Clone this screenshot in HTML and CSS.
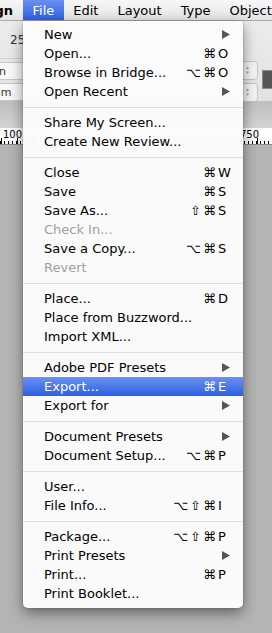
FILE: index.html
```html
<!DOCTYPE html>
<html>
<head>
	<title>File menu</title>
	<link rel="stylesheet" href="styles.css">
</head>
<body>

	<div class="menubar">
		<span class="app"><b>InDesign</b></span>
		<span class="mb-item active">File</span>
		<span class="mb-item">Edit</span>
		<span class="mb-item">Layout</span>
		<span class="mb-item">Type</span>
		<span class="mb-item">Object</span>
	</div>

	<div class="panel">
		<div class="panel-left">
			<div class="zoom">25</div>
			<div class="field f-in">in</div>
			<div class="field f-mm">mm</div>
		</div>
		<div class="panel-right">
			<div class="spinners">
				<div class="spin"><span>&#9652;</span><span>&#9662;</span></div>
				<div class="spin"><span>&#9652;</span><span>&#9662;</span></div>
			</div>
			<div class="swatch"></div>
		</div>
	</div>
	<div class="strip"></div>
	<div class="ruler">
		<span>100</span>
		<span>750</span>
	</div>
	<div class="pasteboard"></div>

	<ul class="menu">
		<li class="item"><span class="label">New</span><span class="key"><svg class="arrow" width="8" height="9" viewBox="0 0 8 9"><path d="M0 0 L8 4.5 L0 9 Z"/></svg></span></li>
		<li class="item"><span class="label">Open...</span><span class="mods">&#8984;</span><span class="key">O</span></li>
		<li class="item"><span class="label">Browse in Bridge...</span><span class="mods">&#8997;&#8984;</span><span class="key">O</span></li>
		<li class="item"><span class="label">Open Recent</span><span class="key"><svg class="arrow" width="8" height="9" viewBox="0 0 8 9"><path d="M0 0 L8 4.5 L0 9 Z"/></svg></span></li>
		<li class="sep"></li>
		<li class="item"><span class="label">Share My Screen...</span></li>
		<li class="item"><span class="label">Create New Review...</span></li>
		<li class="sep"></li>
		<li class="item"><span class="label">Close</span><span class="mods">&#8984;</span><span class="key">W</span></li>
		<li class="item"><span class="label">Save</span><span class="mods">&#8984;</span><span class="key">S</span></li>
		<li class="item"><span class="label">Save As...</span><span class="mods">&#8679;&#8984;</span><span class="key">S</span></li>
		<li class="item off"><span class="label">Check In...</span></li>
		<li class="item"><span class="label">Save a Copy...</span><span class="mods">&#8997;&#8984;</span><span class="key">S</span></li>
		<li class="item off"><span class="label">Revert</span></li>
		<li class="sep"></li>
		<li class="item"><span class="label">Place...</span><span class="mods">&#8984;</span><span class="key">D</span></li>
		<li class="item"><span class="label">Place from Buzzword...</span></li>
		<li class="item"><span class="label">Import XML...</span></li>
		<li class="sep"></li>
		<li class="item"><span class="label">Adobe PDF Presets</span><span class="key"><svg class="arrow" width="8" height="9" viewBox="0 0 8 9"><path d="M0 0 L8 4.5 L0 9 Z"/></svg></span></li>
		<li class="item hl"><span class="label">Export...</span><span class="mods">&#8984;</span><span class="key">E</span></li>
		<li class="item"><span class="label">Export for</span><span class="key"><svg class="arrow" width="8" height="9" viewBox="0 0 8 9"><path d="M0 0 L8 4.5 L0 9 Z"/></svg></span></li>
		<li class="sep"></li>
		<li class="item"><span class="label">Document Presets</span><span class="key"><svg class="arrow" width="8" height="9" viewBox="0 0 8 9"><path d="M0 0 L8 4.5 L0 9 Z"/></svg></span></li>
		<li class="item"><span class="label">Document Setup...</span><span class="mods">&#8997;&#8984;</span><span class="key">P</span></li>
		<li class="sep"></li>
		<li class="item"><span class="label">User...</span></li>
		<li class="item"><span class="label">File Info...</span><span class="mods">&#8997;&#8679;&#8984;</span><span class="key">I</span></li>
		<li class="sep"></li>
		<li class="item"><span class="label">Package...</span><span class="mods">&#8997;&#8679;&#8984;</span><span class="key">P</span></li>
		<li class="item"><span class="label">Print Presets</span><span class="key"><svg class="arrow" width="8" height="9" viewBox="0 0 8 9"><path d="M0 0 L8 4.5 L0 9 Z"/></svg></span></li>
		<li class="item"><span class="label">Print...</span><span class="mods">&#8984;</span><span class="key">P</span></li>
		<li class="item"><span class="label">Print Booklet...</span></li>
	</ul>

</body>
</html>
```

FILE: styles.css
```css
body {
	margin: 0;
	width: 272px;
	height: 633px;
	overflow: hidden;
	position: relative;
	font-family: "DejaVu Sans", sans-serif;
	background-color: #B4B4B4;
}

/* menu bar */
.menubar {
	height: 20px;
	display: flex;
	align-items: stretch;
	background: linear-gradient(#F7F7F7, #E4E4E4);
	border-bottom: 1px solid #A9A9A9;
	font-size: 13px;
	color: #000;
	white-space: nowrap;
}
.app {
	flex-shrink: 0;
	width: 13px;
	margin-right: 10px;
	display: flex;
	justify-content: flex-end;
	align-items: center;
	overflow: hidden;
}
.mb-item {
	flex-shrink: 0;
	display: flex;
	align-items: center;
	padding: 0 9.5px;
}
.mb-item.active {
	background: linear-gradient(#6A90F1, #2E60E4);
	color: #FFF;
}

/* control panel behind the menu */
.panel {
	height: 80px;
	display: flex;
	justify-content: space-between;
	background: linear-gradient(#ECECEC, #E2E2E2);
	font-size: 11px;
	color: #333;
}
.panel-left {
	width: 30px;
	display: flex;
	flex-direction: column;
}
.zoom {
	height: 37px;
	padding-left: 10px;
	line-height: 38px;
	font-size: 12px;
	border-bottom: 1px solid #D0D0D0;
}
.field {
	height: 17px;
	line-height: 17px;
	margin-top: 3px;
	background-color: #F8F8F8;
	border: 1px solid #C8C8C8;
	border-left: none;
	white-space: nowrap;
	overflow: hidden;
}
.f-in {
	text-indent: -4px;
}
.f-mm {
	text-indent: -10px;
}
.panel-right {
	width: 32px;
	display: flex;
	align-items: center;
	gap: 4px;
	padding-top: 40px;
	box-sizing: border-box;
}
.spinners {
	display: flex;
	flex-direction: column;
	gap: 3px;
}
.spin {
	width: 19px;
	height: 17px;
	margin-left: -3px;
	background-color: #F4F4F4;
	border: 1px solid #C4C4C4;
	border-radius: 4px;
	display: flex;
	flex-direction: column;
	align-items: center;
	justify-content: center;
	font-size: 5px;
	line-height: 5px;
	color: #999;
}
.swatch {
	width: 12px;
	height: 17px;
	margin-top: -4px;
	background-color: #555;
	border: 1px solid #888;
	border-right: none;
}
.strip {
	height: 27px;
	background: linear-gradient(#BEBEBE, #D4D4D4);
}
.ruler {
	height: 17px;
	box-sizing: border-box;
	display: flex;
	justify-content: space-between;
	padding: 1px 13px 0 3px;
	background:
		repeating-linear-gradient(90deg, #000 0, #000 1px, transparent 1px, transparent 4px) left bottom / 100% 3px no-repeat,
		repeating-linear-gradient(90deg, #000 0, #000 1px, transparent 1px, transparent 16px) 1px bottom / 100% 6px no-repeat,
		#FDFDFD;
	font-size: 10px;
	color: #000;
	border-bottom: 1px solid #888;
}
.pasteboard {
	height: 488px;
}

/* File menu */
.menu {
	position: absolute;
	left: 23px;
	top: 21px;
	width: 220px;
	margin: 0;
	padding: 4px 0 5px;
	list-style: none;
	background-color: rgba(251, 251, 251, 0.98);
	border-radius: 0 0 5px 5px;
	box-shadow: 0 5px 14px rgba(0, 0, 0, 0.45), 0 0 0 1px rgba(0, 0, 0, 0.08);
	font-size: 13px;
	color: #000;
}
.item {
	height: 19px;
	display: flex;
	align-items: center;
	padding: 0 12px 0 21px;
	white-space: nowrap;
}
.label {
	flex: 1;
}
.mods {
	letter-spacing: 2px;
}
.key {
	width: 13px;
	display: flex;
	justify-content: flex-end;
}
.mods + .key {
	justify-content: flex-start;
}
.arrow {
	fill: #555;
	margin-right: 1px;
}
.off {
	color: #9E9E9E;
}
.hl {
	background: linear-gradient(#6A90F1, #2E60E4);
	color: #FFF;
}
.sep {
	height: 12px;
	display: flex;
	align-items: center;
}
.sep::before {
	content: "";
	flex: 1;
	height: 1px;
	background-color: #E0E0E0;
}
```
